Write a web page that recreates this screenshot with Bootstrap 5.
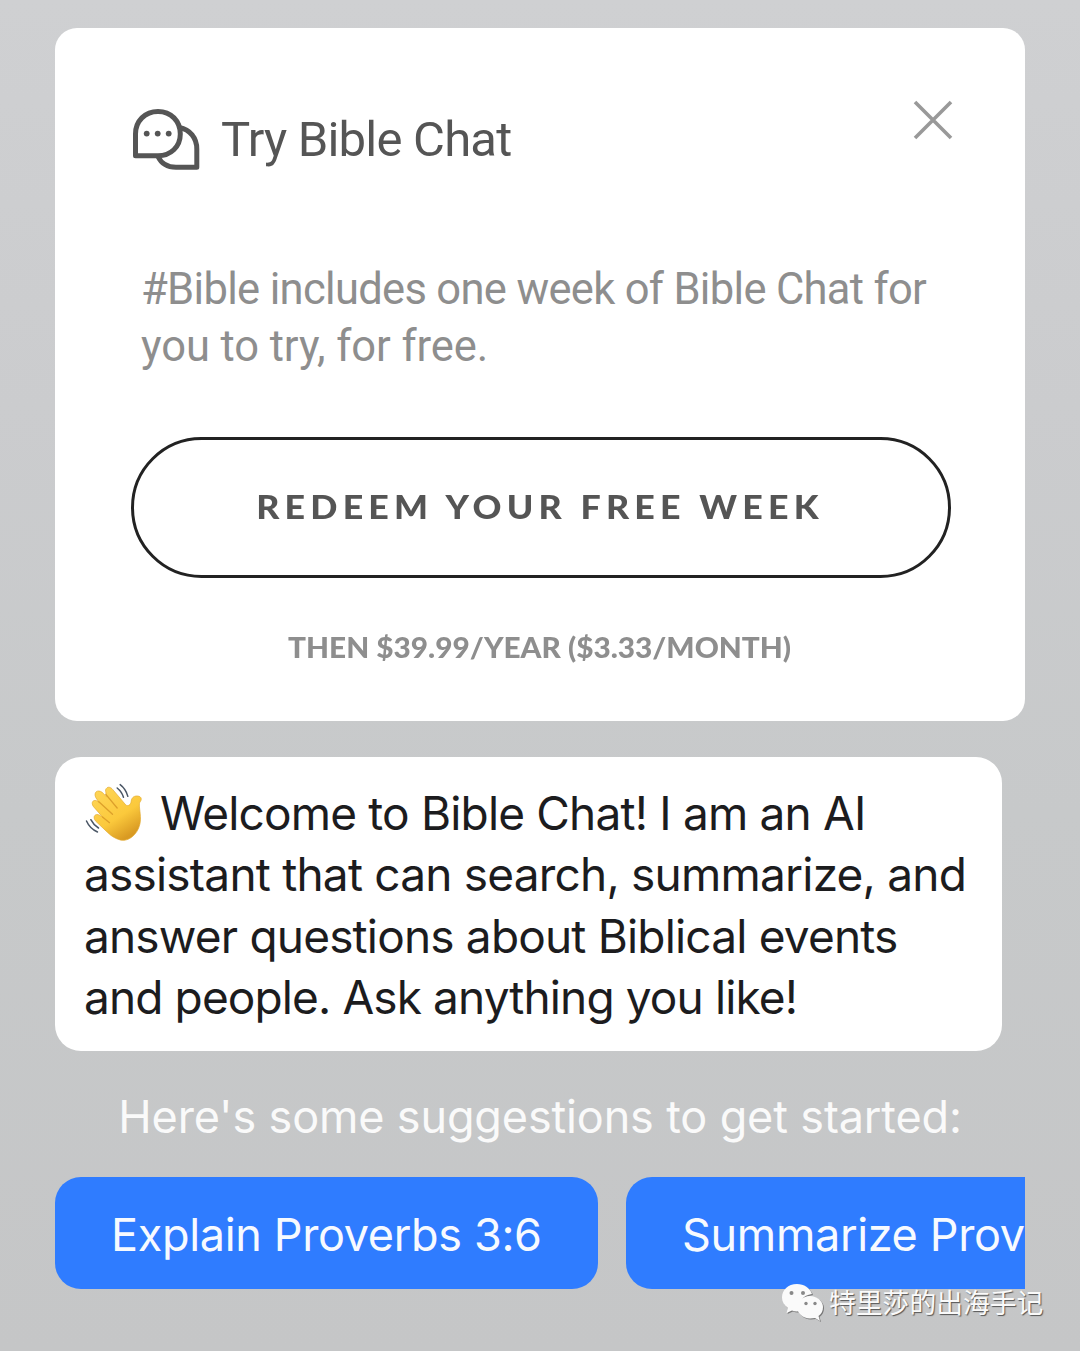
<!DOCTYPE html>
<html lang="en">
<head>
<meta charset="utf-8">
<meta name="viewport" content="width=device-width, initial-scale=1">
<title>Bible Chat</title>
<link href="https://cdn.jsdelivr.net/npm/bootstrap@5.3.0/dist/css/bootstrap.min.css" rel="stylesheet">
<style>
body{width:1080px;height:1351px;overflow:hidden;background:linear-gradient(180deg,#cfd0d2 0,#cbccce 30%,#c7c9ca 60%,#c5c6c7 100%);font-family:Inter,"Liberation Sans",sans-serif}
.screen{padding:28px 55px 0}
.offer{height:693px;border-radius:22px;padding:74px 73px 0 76px}
.din{font-family:Roboto,"Liberation Sans",sans-serif}
.offer-title{font-size:49px;line-height:60px;color:#555;margin:8px 0 0 19px;letter-spacing:-.78px}
.chat-icon{width:70px;height:64px;margin:5px 0 0 1px}
.close-btn{width:40px;height:40px;margin:-2px -1px 0 0}
.offer-text{font-size:43.5px;line-height:57px;color:#8e8e8e;margin:90px 0 0 10px;white-space:nowrap}
.ln{display:block;white-space:nowrap}
.l-d1{letter-spacing:-.67px}
.l-d2{letter-spacing:-.08px}
.l-m1,.l-m3{letter-spacing:-.82px}
.l-m2{letter-spacing:-.79px}
.l-m4{letter-spacing:-.88px}
.l-hint{letter-spacing:-.15px}
.chip span{letter-spacing:-.34px}
.wide{display:inline-block;transform:scaleX(1.1)}
.price .wide{transform:scaleX(1.063)}
.redeem{width:820px;height:141px;border:3px solid #222;border-radius:71px;margin-top:62px;font-family:Lato,sans-serif;font-weight:900;font-size:32.5px;letter-spacing:4.7px;color:#555;background:#fff;padding:0 2px 1px 0}
.price{font-family:Lato,sans-serif;font-weight:900;font-size:28px;line-height:36px;color:#8e8e8e;margin-top:51px;padding-right:3px}
.bubble{width:947px;height:294px;border-radius:26px;margin-top:36px;padding:26px 29px 0;font-size:46px;line-height:61.4px;color:#1c1c1e}
.wave{width:62px;height:60px;vertical-align:top;margin:-1px 15px 0 -1px}
.hint{font-size:45px;line-height:60px;margin-top:36px;color:#fafafa;white-space:nowrap}
.chips{margin-top:30px;gap:28px}
.chip{height:112px;border:0;border-radius:26px;background:#2f7cff;color:#f7faff;font-size:45px;white-space:nowrap;padding:3px 0 0 56px;width:543px;text-align:left;flex:none}
.watermark{left:780px;top:1280px;color:#fafafa;font-family:"Noto Sans CJK SC",sans-serif;font-size:26.8px;line-height:44px;text-shadow:1px 1px 1px #555;white-space:nowrap}
.watermark svg{width:44px;height:42px;margin-right:5px;filter:drop-shadow(1px 1px .5px #777)}
</style>
<script src="https://cdn.jsdelivr.net/npm/bootstrap@5.3.0/dist/js/bootstrap.bundle.min.js"></script>
</head>
<body>
<main class="screen">
  <section class="offer bg-white">
    <div class="d-flex align-items-start">
      <svg class="chat-icon" viewBox="0 0 70 64" fill="none" stroke="#555" stroke-width="5" stroke-linejoin="round">
        <path d="M3.500 48.800V27C3.500 14 13 4.500 26 4.500S48.300 14 48.300 27 38.500 48.800 26 48.800Z"/>
        <path d="M47.500 20.500C58 22.500 64.800 31 64.800 42V60.200H44C35 60.200 29 56 26 49.500"/>
        <g fill="#555" stroke="none"><circle cx="14.700" cy="26.600" r="2.900"/><circle cx="25.700" cy="26.600" r="2.900"/><circle cx="36.700" cy="26.600" r="2.900"/></g>
      </svg>
      <h1 class="offer-title din fw-normal"><span class="ln">Try Bible Chat</span></h1>
      <svg class="close-btn ms-auto" viewBox="0 0 40 40" fill="none" stroke="#999" stroke-width="3.600"><path d="M2 2 38 38M38 2 2 38"/></svg>
    </div>
    <p class="offer-text din mb-0"><span class="ln l-d1">#Bible includes one week of Bible Chat for</span><span class="ln l-d2">you to try, for free.</span></p>
    <button class="redeem d-flex align-items-center justify-content-center"><span class="wide">REDEEM YOUR FREE WEEK</span></button>
    <p class="price text-center mb-0"><span class="wide">THEN $39.99/YEAR ($3.33/MONTH)</span></p>
  </section>
  <section class="bubble bg-white">
    <div class="ln"><svg class="wave" viewBox="42 38 183 180" role="img" aria-label="Waving hand">
      <defs><linearGradient id="skin" x1="0" y1="0" x2=".6" y2="1"><stop offset="0" stop-color="#ffd75a"/><stop offset=".65" stop-color="#fbc93c"/><stop offset="1" stop-color="#d99a22"/></linearGradient></defs>
      <path fill="url(#skin)" stroke="#e3a92e" stroke-width="2" d="M108 62C113 49 124 53 130 61L169 107C176 112 184 106 185 96C186 84 196 77 209 81C218 85 216 93 211 99C207 107 213 127 213 150C212 188 183 214 160 213C144 212 126 201 115 190L79 156C67 142 78 130 91 138L101 145L72 112C62 98 73 88 85 96L89 100L79 85C71 69 84 59 98 69L111 82Z"/>
      <path fill="none" stroke="#dda02b" stroke-width="4" stroke-linecap="round" d="M109 75 143 116M88 97 129 135M99 143 120 160"/>
      <path fill="none" stroke="#4a5665" stroke-width="4.500" stroke-linecap="round" d="M152 46Q169 59 175 81M143 56Q157 67 162 84M51 155Q61 178 84 188M64 151Q72 167 87 176"/>
    </svg><span class="l-m1">Welcome to Bible Chat! I am an AI</span></div>
    <div class="ln"><span class="l-m2">assistant that can search, summarize, and</span></div>
    <div class="ln"><span class="l-m3">answer questions about Biblical events</span></div>
    <div class="ln"><span class="l-m4">and people. Ask anything you like!</span></div>
  </section>
  <p class="hint text-center mb-0"><span class="l-hint">Here's some suggestions to get started:</span></p>
  <div class="chips d-flex overflow-hidden">
    <button class="chip"><span>Explain Proverbs 3:6</span></button>
    <button class="chip"><span>Summarize Prov</span></button>
  </div>
</main>
<div class="watermark position-absolute d-flex align-items-center">
  <svg viewBox="0 0 44 42"><path fill="#fafafa" d="M17 3C8 3 2 9 2 16.500 2 21 4 24 8 27L6.500 32 12 29.500Q16 31 20 30 18 15 32 13C30 7 24 3 17 3Z"/><path fill="#fafafa" d="M30 15C23 15 17 20 17 26S23 37.500 30 37.500L35 37 40 40 38.500 35C41.500 33 43 30 43 26 43 20 37 15 30 15Z"/><g fill="#888"><circle cx="11.500" cy="12" r="2"/><circle cx="23" cy="12" r="2"/><circle cx="26" cy="22.500" r="1.700"/><circle cx="35" cy="22.500" r="1.700"/></g></svg>
  <span>特里莎的出海手记</span>
</div>
</body>
</html>
